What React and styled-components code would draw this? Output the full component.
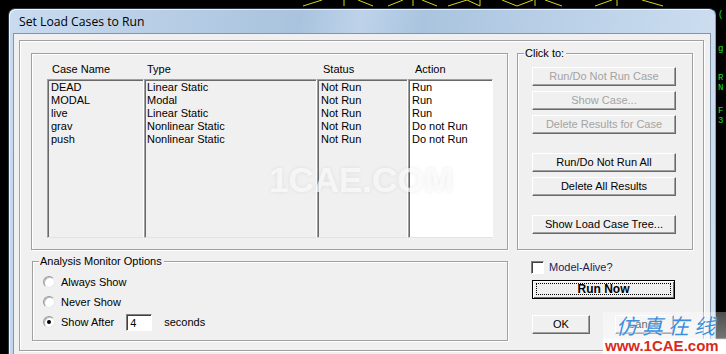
import React from 'react';
import styled, { createGlobalStyle } from 'styled-components';

const GlobalStyle = createGlobalStyle`
  html, body {
    margin: 0;
    padding: 0;
    background: #000;
  }
  body {
    width: 726px;
    height: 354px;
    overflow: hidden;
    font-family: "Liberation Sans", Arial, sans-serif;
    font-size: 11px;
    color: #000;
  }
`;

const Desktop = styled.div`
  position: relative;
  width: 726px;
  height: 354px;
  overflow: hidden;
  box-sizing: border-box;
  padding: 8px 0 0 8px;
`;

const Wires = styled.svg`
  position: absolute;
  left: 0;
  top: 0;
`;

const GreenText = styled.div`
  position: absolute;
  left: 718px;
  top: ${(p) => p.top}px;
  color: #19e019;
  font-family: "Liberation Mono", monospace;
  font-size: 9px;
  line-height: 9px;
  white-space: nowrap;
`;

const Window = styled.div`
  position: relative;
  width: 708px;
  height: 360px;
  box-sizing: border-box;
  border: 1px solid #2b3440;
  border-right-color: #4fb4e4;
  border-bottom: none;
  border-radius: 7px 7px 0 0;
  padding: 0 4px;
  background: linear-gradient(100deg, #c9dbef 0%, #b9cfe7 18%, #a9c3de 38%, #bed3ea 46%, #aac4df 54%, #bfd4ea 78%, #d2e2f2 100%);
  box-shadow: inset 1px 1px 0 rgba(255, 255, 255, 0.7);
`;

const TitleBar = styled.div`
  height: 24px;
  display: flex;
  align-items: center;
  padding-left: 6px;
  font-family: "Open Sans", "Noto Sans", sans-serif;
  font-size: 12.2px;
  color: #000;
  padding-top: 1px;
  box-sizing: border-box;
`;

const Client = styled.div`
  width: 698px;
  box-sizing: border-box;
  border: 1px solid #8395aa;
  border-bottom: none;
  background: #f0f0f0;
  padding: 6px 6px 6px 5px;
`;

const Groove = styled.div`
  width: 685px;
  height: 311px;
  box-sizing: border-box;
  border: 1px solid #a0a0a0;
  box-shadow: inset 1px 1px 0 #fff, 1px 1px 0 #fff;
  display: grid;
  grid-template-columns: 477px 176px;
  grid-template-rows: 197px 80px;
  column-gap: 9px;
  row-gap: 11px;
  padding: 12px 10px 9px 11px;
`;

const Etched = styled.div`
  position: relative;
  box-sizing: border-box;
  border: 1px solid #a0a0a0;
  box-shadow: inset 1px 1px 0 #fff, 1px 1px 0 #fff;
`;

const Legend = styled.span`
  position: absolute;
  left: 6px;
  top: -7px;
  padding: 0 2px 0 1px;
  background: #f0f0f0;
  line-height: 13px;
`;

const ListBox = styled(Etched)`
  padding: 9px 0 0 15px;
`;

const Columns = styled.div`
  display: grid;
  grid-template-columns: 97px 173px 91px 85px;
`;

const Column = styled.div`
  display: flex;
  flex-direction: column;
`;

const Head = styled.div`
  height: 16px;
  line-height: 13px;
  padding-left: ${(p) => p.pad}px;
`;

const Body = styled.div`
  height: 159px;
  box-sizing: border-box;
  border: 1px solid;
  border-color: #a0a0a0 #fff #e3e3e3 #a0a0a0;
  box-shadow: inset 1px 1px 0 #696969;
  background: ${(p) => (p.white ? '#fff' : '#f0f0f0')};
  padding: 1px 0 0 ${(p) => p.pad}px;
`;

const Cell = styled.div`
  line-height: 13.1px;
  white-space: nowrap;
`;

const Watermark = styled.div`
  position: absolute;
  left: 237px;
  top: 108px;
  font-family: "Liberation Sans", Arial, sans-serif;
  font-weight: bold;
  font-size: 35px;
  line-height: 35px;
  color: rgba(255, 255, 255, 0.7);
  text-shadow: 0 0 4px rgba(0, 0, 0, 0.08);
  pointer-events: none;
`;

const ClickBox = styled(Etched)`
  display: flex;
  flex-direction: column;
  align-items: flex-start;
  padding: 13px 0 0 14px;
`;

const Button = styled.div`
  width: ${(p) => p.w || 144}px;
  height: 19px;
  box-sizing: border-box;
  margin-top: ${(p) => p.mt || 0}px;
  border: 1px solid;
  border-color: #fff #696969 #696969 #fff;
  box-shadow: inset -1px -1px 0 #a0a0a0;
  background: #f0f0f0;
  display: flex;
  align-items: center;
  justify-content: center;
  line-height: 13px;
  color: ${(p) => (p.disabled ? '#a3a3a3' : '#000')};
  white-space: nowrap;
`;

const MonitorBox = styled(Etched)`
  margin-left: 1px;
  padding: 10px 0 0 10px;
`;

const RadioRow = styled.div`
  height: 20px;
  display: flex;
  align-items: center;
`;

const Radio = styled.span`
  width: 12px;
  height: 12px;
  box-sizing: border-box;
  border-radius: 50%;
  border: 1px solid;
  border-color: #9a9a9a #e8e8e8 #e8e8e8 #9a9a9a;
  box-shadow: inset 1px 1px 0 #bcbcbc;
  background: #fff;
  display: flex;
  align-items: center;
  justify-content: center;
  margin-right: 6px;

  &::after {
    content: '';
    width: 4px;
    height: 4px;
    border-radius: 50%;
    background: ${(p) => (p.checked ? '#000' : 'transparent')};
  }
`;

const Label = styled.span`
  line-height: 13px;
  margin-left: ${(p) => p.ml || 0}px;
`;

const NumInput = styled.div`
  width: 26px;
  height: 17px;
  box-sizing: border-box;
  margin-left: 12px;
  border: 1px solid;
  border-color: #808080 #fff #fff #808080;
  box-shadow: inset 1px 1px 0 #404040;
  background: #fff;
  padding: 2px 0 0 3px;
  line-height: 13px;
`;

const ActionArea = styled.div`
  display: flex;
  flex-direction: column;
  align-items: flex-start;
  padding-left: 15px;
`;

const CheckRow = styled.div`
  display: flex;
  align-items: center;
  margin-left: -1px;
  height: 13px;
`;

const CheckBox = styled.span`
  width: 13px;
  height: 13px;
  box-sizing: border-box;
  border: 1px solid;
  border-color: #808080 #fff #fff #808080;
  box-shadow: inset 1px 1px 0 #404040;
  background: #fff;
  margin-right: 5px;
`;

const AliveLabel = styled.span`
  color: #1b1b5c;
  line-height: 13px;
`;

const DefaultButton = styled.div`
  width: 143px;
  height: 19px;
  box-sizing: border-box;
  margin-top: 6px;
  border: 1px solid #000;
  background: #f0f0f0;
  display: flex;
  box-shadow: inset 1px 1px 0 #fff, inset -1px -1px 0 #696969;
  padding: 2px 3px 3px 3px;
`;

const FocusRect = styled.span`
  flex: 1;
  border: 1px dotted #000;
  display: flex;
  align-items: center;
  justify-content: center;
  font-weight: bold;
  font-size: 12px;
  line-height: 12px;
`;

const ButtonRow = styled.div`
  display: flex;
  gap: 25px;
  margin-top: 16px;
`;

const Logo = styled.div`
  position: absolute;
  left: 603px;
  top: 312px;
  width: 123px;
  height: 42px;
  display: flex;
  flex-direction: column;
  align-items: flex-end;
  background: linear-gradient(180deg, rgba(255, 255, 255, 0.3) 0%, rgba(255, 255, 255, 0.45) 62%, #fff 66%, #fff 100%);
  pointer-events: none;
`;

const LogoCn = styled.div`
  width: 110px;
  padding-right: 6px;
  font-family: "Noto Sans CJK SC", sans-serif;
  font-size: 21px;
  line-height: 26px;
  letter-spacing: 5px;
  font-style: italic;
  color: #3d8fdc;
  text-align: right;
  box-sizing: border-box;
  text-shadow: 0 0 2px #fff;
`;

const LogoEn = styled.div`
  width: 123px;
  padding-left: 2px;
  box-sizing: border-box;
  font-family: "Liberation Sans", Arial, sans-serif;
  font-weight: bold;
  font-size: 15px;
  line-height: 16px;
  color: #d92a1e;
`;

const cases = [
  { name: 'DEAD', type: 'Linear Static', status: 'Not Run', action: 'Run' },
  { name: 'MODAL', type: 'Modal', status: 'Not Run', action: 'Run' },
  { name: 'live', type: 'Linear Static', status: 'Not Run', action: 'Run' },
  { name: 'grav', type: 'Nonlinear Static', status: 'Not Run', action: 'Do not Run' },
  { name: 'push', type: 'Nonlinear Static', status: 'Not Run', action: 'Do not Run' },
];

const columns = [
  { key: 'name', title: 'Case Name', head: 5, pad: 3 },
  { key: 'type', title: 'Type', head: 3, pad: 2 },
  { key: 'status', title: 'Status', head: 6, pad: 3 },
  { key: 'action', title: 'Action', head: 7, pad: 3, white: true },
];

const wireLines = [
  [303, 6, 322, 0], [344, 0, 344, 6], [358, 0, 373, 6], [388, 6, 403, 0],
  [413, 0, 413, 6], [422, 0, 437, 6], [448, 6, 467, 0], [467, 0, 480, 6],
  [480, 0, 480, 6], [502, 0, 517, 6], [517, 6, 533, 0], [535, 0, 535, 6],
  [545, 0, 562, 6], [595, 6, 612, 0], [617, 0, 617, 6], [642, 0, 663, 6],
];

const greenMarks = [
  { top: 11, text: '(' },
  { top: 45, text: 'g' },
  { top: 74, text: 'R' },
  { top: 84, text: 'N' },
  { top: 107, text: 'F' },
  { top: 117, text: '3' },
];

const App = () => {
  return (
    <>
      <GlobalStyle />
      <Desktop>
        <Wires width="726" height="10">
          {wireLines.map(([x1, y1, x2, y2], i) => (
            <line key={i} x1={x1} y1={y1} x2={x2} y2={y2} stroke="#d6d61a" strokeWidth="1" />
          ))}
        </Wires>
        {greenMarks.map((m) => (
          <GreenText key={m.top} top={m.top}>{m.text}</GreenText>
        ))}

        <Window>
          <TitleBar>Set Load Cases to Run</TitleBar>
          <Client>
            <Groove>
              <ListBox>
                <Columns>
                  {columns.map((col) => (
                    <Column key={col.key}>
                      <Head pad={col.head}>{col.title}</Head>
                      <Body pad={col.pad} white={col.white}>
                        {cases.map((c) => (
                          <Cell key={c.name}>{c[col.key]}</Cell>
                        ))}
                      </Body>
                    </Column>
                  ))}
                </Columns>
                <Watermark>1CAE.COM</Watermark>
              </ListBox>

              <ClickBox>
                <Legend>Click to:</Legend>
                <Button disabled>Run/Do Not Run Case</Button>
                <Button disabled mt={5}>Show Case...</Button>
                <Button disabled mt={5}>Delete Results for Case</Button>
                <Button mt={19}>Run/Do Not Run All</Button>
                <Button mt={5}>Delete All Results</Button>
                <Button mt={19}>Show Load Case Tree...</Button>
              </ClickBox>

              <MonitorBox>
                <Legend>Analysis Monitor Options</Legend>
                <RadioRow>
                  <Radio />
                  <Label>Always Show</Label>
                </RadioRow>
                <RadioRow>
                  <Radio />
                  <Label>Never Show</Label>
                </RadioRow>
                <RadioRow>
                  <Radio checked />
                  <Label>Show After</Label>
                  <NumInput>4</NumInput>
                  <Label ml={12}>seconds</Label>
                </RadioRow>
              </MonitorBox>

              <ActionArea>
                <CheckRow>
                  <CheckBox />
                  <AliveLabel>Model-Alive?</AliveLabel>
                </CheckRow>
                <DefaultButton>
                  <FocusRect>Run Now</FocusRect>
                </DefaultButton>
                <ButtonRow>
                  <Button w={58}>OK</Button>
                  <Button w={59}>Cancel</Button>
                </ButtonRow>
              </ActionArea>
            </Groove>
          </Client>
        </Window>

        <Logo>
          <LogoCn>仿真在线</LogoCn>
          <LogoEn>www.1CAE.com</LogoEn>
        </Logo>
      </Desktop>
    </>
  );
};

export default App;
